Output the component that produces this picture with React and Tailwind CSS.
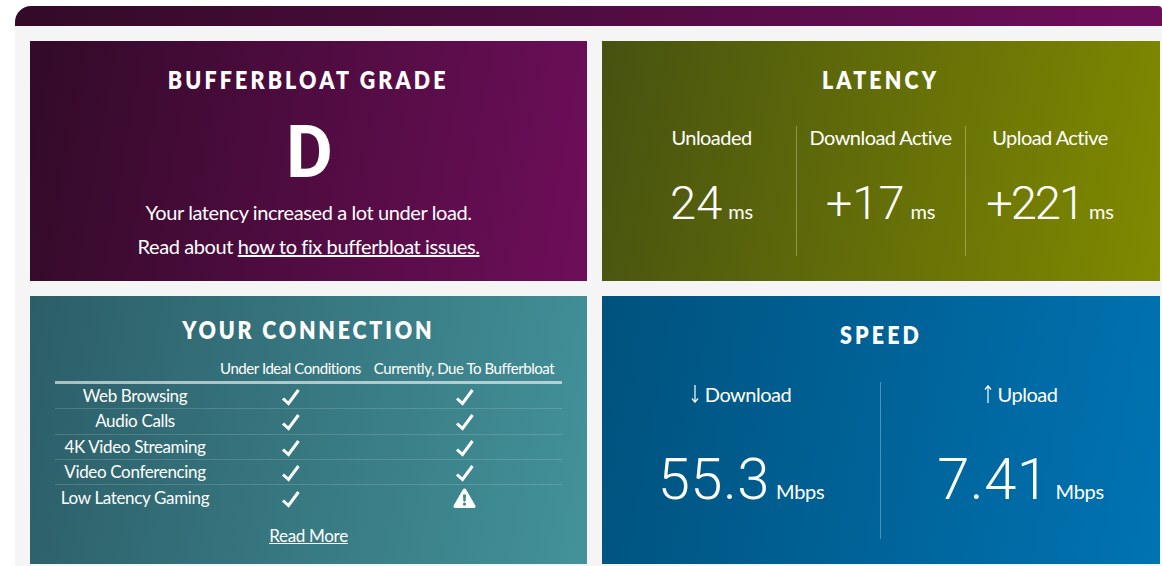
const rows = [
  { name: 'Web Browsing', ideal: true, now: true },
  { name: 'Audio Calls', ideal: true, now: true },
  { name: '4K Video Streaming', ideal: true, now: true },
  { name: 'Video Conferencing', ideal: true, now: true },
  { name: 'Low Latency Gaming', ideal: true, now: false },
];

function Check() {
  return (
    <svg width="19" height="18" viewBox="0 0 19 18" fill="none" stroke="white" strokeWidth="3" className="translate-y-px">
      <path d="M2 10.5 L7.5 15.5 L17.5 2" />
    </svg>
  );
}

function Warning() {
  return (
    <svg width="23" height="20" viewBox="0 0 23 20" fill="white">
      <path fillRule="evenodd" d="M11.5 0.5 C12.2 0.5 12.8 0.9 13.1 1.4 L22.3 17.4 C23 18.6 22.2 20 20.8 20 L2.2 20 C0.8 20 0 18.6 0.7 17.4 L9.9 1.4 C10.2 0.9 10.8 0.5 11.5 0.5 Z M10 6.5 L10.4 13.5 L12.6 13.5 L13 6.5 Z M11.5 14.5 A1.6 1.6 0 1 0 11.5 17.7 A1.6 1.6 0 1 0 11.5 14.5 Z" />
    </svg>
  );
}

function Arrow({ up }) {
  return (
    <svg width="8" height="18" viewBox="0 0 8 18" fill="none" stroke="white" strokeWidth="1.2" className={up ? 'rotate-180' : ''}>
      <path d="M4 0 V17 M1 13.5 L4 17.2 L7 13.5" />
    </svg>
  );
}

function Title({ children, className = 'tracking-[3.7px]' }) {
  return (
    <h2 className={`text-[25px] leading-[30px] font-extrabold text-center ${className}`}>
      <span className="inline-block scale-x-[0.855] -translate-y-px whitespace-nowrap">{children}</span>
    </h2>
  );
}

function Stat({ label, value, unit, last, tight }) {
  return (
    <div className={`w-[169px] h-[130px] flex flex-col items-center ${last ? '' : 'border-r border-white/30'}`}>
      <div className="text-[20px] leading-[24px] tracking-[-0.55px] mt-[-1px]">{label}</div>
      <div className="mt-[26px] flex items-baseline gap-[6px]">
        <span className={`text-[47px] leading-[56px] font-light font-['Roboto',sans-serif] ${tight ? 'tracking-[-2px]' : ''}`}>{value}</span>
        <span className="text-[20px] leading-[24px] tracking-[-0.2px]">{unit}</span>
      </div>
    </div>
  );
}

function Rate({ label, value, up, divider }) {
  return (
    <div className={`w-[279px] h-[157px] flex flex-col items-center ${divider ? 'border-r border-white/30' : ''}`}>
      <div className="flex items-center gap-[6px] text-[20px] leading-[24px] tracking-[-0.5px]"><Arrow up={up} />{label}</div>
      <div className="mt-[38px] flex items-baseline gap-[6px]">
        <span className="text-[58px] leading-[70px] font-light tracking-[0.5px] font-['Roboto',sans-serif]">{value}</span>
        <span className="text-[20px] leading-[24px] tracking-[-0.3px]">Mbps</span>
      </div>
    </div>
  );
}

export default function App() {
  return (
    <div className="w-[1162px] h-[566px] overflow-hidden bg-white pt-[6px] pl-[15px] text-white font-['Lato','Liberation_Sans',sans-serif]">
      <div className="h-[20px] rounded-tl-[16px] rounded-tr-[4px] bg-[linear-gradient(90deg,#320a28,#6e0e5a)]" />
      <div className="h-[540px] bg-[#f5f5f5] pl-[15px] pt-[15px] pr-[2px]">
        <div className="grid grid-cols-[557px_558px] grid-rows-[240px_268px] gap-x-[15px] gap-y-[15px]">
          {/* Grade */}
          <section className="pt-[24px] text-center bg-[linear-gradient(100deg,#320a28,#6e0e5a)]">
            <Title>BUFFERBLOAT GRADE</Title>
            <div className="text-[72px] leading-[84px] font-bold mt-[16px] h-[84px] font-['Roboto',sans-serif] tracking-[-2px]">D</div>
            <p className="text-[20px] leading-[34px] tracking-[-0.4px]">Your latency increased a lot under load.</p>
            <p className="text-[20px] leading-[34px] tracking-[-0.4px]">
              Read about <a href="#" className="underline">how to fix bufferbloat issues.</a>
            </p>
          </section>

          {/* Latency */}
          <section className="pt-[24px] bg-[linear-gradient(100deg,#475211,#808a00)]">
            <Title>LATENCY</Title>
            <div className="mt-[31px] flex justify-center">
              <Stat label="Unloaded" value="24" unit="ms" />
              <Stat label="Download Active" value="+17" unit="ms" />
              <Stat label="Upload Active" value="+221" unit="ms" last tight />
            </div>
          </section>

          {/* Connection */}
          <section className="pt-[19px] px-[25px] bg-[linear-gradient(100deg,#2c5e68,#43929a)]">
            <Title className="tracking-[3.3px]">YOUR CONNECTION</Title>
            <div className="grid grid-cols-[160px_151px_196px] mt-[6px] text-center">
              <div className="h-[30px] col-start-2 text-[15px] leading-[34px] tracking-[-0.45px] whitespace-nowrap">Under Ideal Conditions</div>
              <div className="h-[30px] text-[15px] leading-[34px] tracking-[-0.45px] whitespace-nowrap">Currently, Due To Bufferbloat</div>
            </div>
            <div className="border-t-[3px] border-white/60">
              {rows.map((row, idx) => (
                <div key={row.name} className={`grid grid-cols-[160px_151px_196px] items-center text-center h-[25.3px] ${idx < rows.length - 1 ? 'border-b border-white/15' : ''}`}>
                  <div className="text-[17px] leading-[24px] tracking-[-0.35px] whitespace-nowrap">{row.name}</div>
                  <div className="flex justify-center"><Check /></div>
                  <div className="flex justify-center">{row.now ? <Check /> : <Warning />}</div>
                </div>
              ))}
            </div>
            <div className="mt-[14px] text-center text-[17px] leading-[24px] tracking-[-0.3px]">
              <a href="#" className="underline">Read More</a>
            </div>
          </section>

          {/* Speed */}
          <section className="pt-[24px] bg-[linear-gradient(100deg,#00527d,#0073b3)]">
            <Title>SPEED</Title>
            <div className="mt-[32px] flex justify-center">
              <Rate label="Download" value="55.3" divider />
              <Rate label="Upload" value="7.41" up />
            </div>
          </section>
        </div>
      </div>
    </div>
  );
}
